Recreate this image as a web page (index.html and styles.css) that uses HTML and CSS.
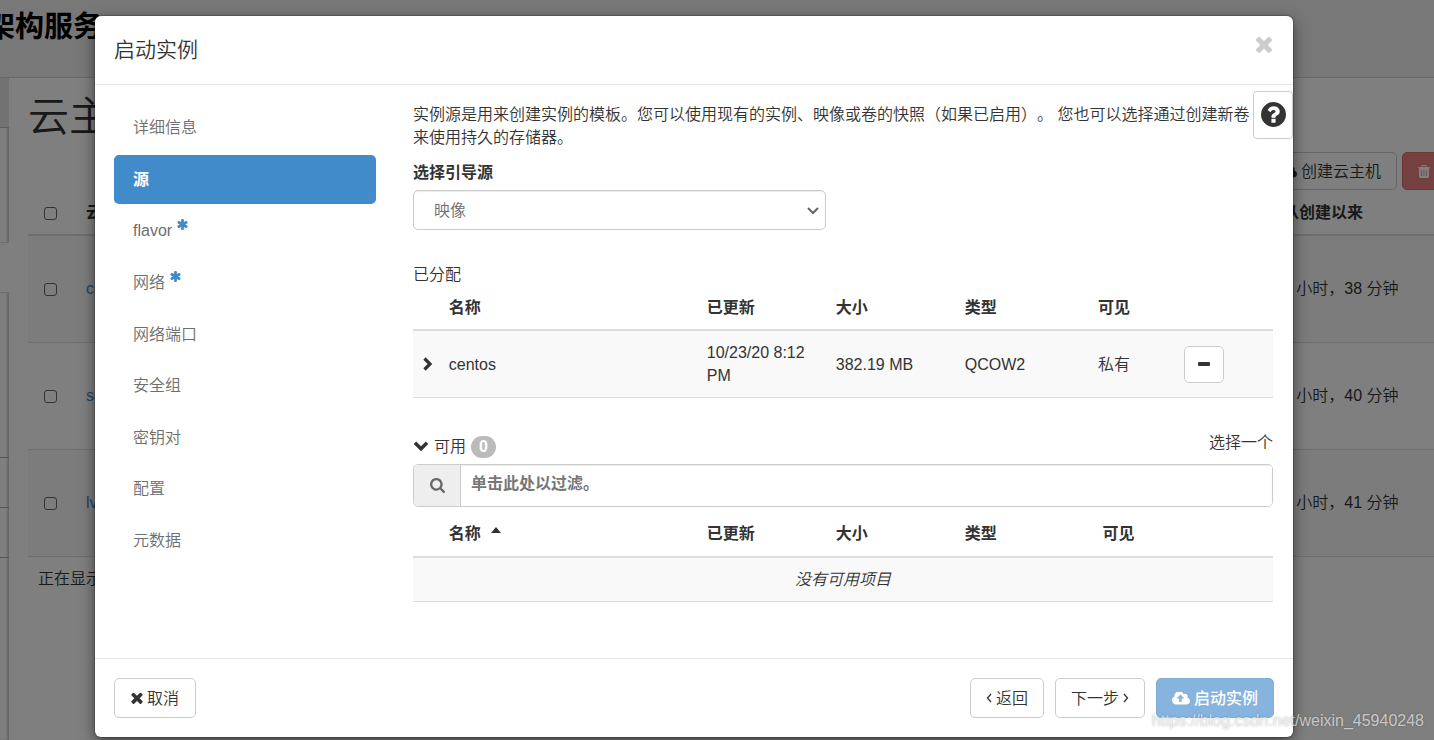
FILE: index.html
```html
<!DOCTYPE html>
<html lang="zh-CN">
<head>
<meta charset="utf-8">
<title>启动实例</title>
<link rel="stylesheet" href="styles.css">
</head>
<body>
<svg class="sprite" aria-hidden="true">
  <symbol id="i-times" viewBox="300 300 1192 1256"><path d="M1490 1322q0 40-28 68l-136 136q-28 28-68 28t-68-28l-294-294-294 294q-28 28-68 28t-68-28l-136-136q-28-28-28-68t28-68l294-294-294-294q-28-28-28-68t28-68l136-136q28-28 68-28t68 28l294 294 294-294q28-28 68-28t68 28l136 136q28 28 28 68t-28 68l-294 294 294 294q28 28 28 68z"/></symbol>
  <symbol id="i-question" viewBox="128 128 1536 1536"><path d="M1024 1376v-192q0-14-9-23t-23-9h-192q-14 0-23 9t-9 23v192q0 14 9 23t23 9h192q14 0 23-9t9-23zm256-672q0-88-55.500-163t-138.500-116-170-41q-243 0-371 213-15 24 8 42l132 100q7 6 19 6 16 0 25-12 53-68 86-92 34-24 86-24 48 0 85.500 26t37.500 59q0 38-20 61t-68 45q-63 28-115.500 86.500t-52.500 125.500v36q0 14 9 23t23 9h192q14 0 23-9t9-23q0-19 21.500-49.500t54.500-49.500q32-18 49-28.500t46-35 44.500-48 28-60.500 12.500-81zm384 192q0 209-103 385.500t-279.500 279.500-385.500 103-385.500-103-279.500-279.500-103-385.500 103-385.500 279.500-279.500 385.500-103 385.500 103 279.500 279.500 103 385.500z"/></symbol>
  <symbol id="i-search" viewBox="64 128 1664 1664"><path d="M1216 832q0-185-131.500-316.500t-316.500-131.500-316.500 131.500-131.500 316.500 131.500 316.500 316.500 131.500 316.500-131.500 131.500-316.500zm512 832q0 52-38 90t-90 38q-54 0-90-38l-343-342q-179 124-399 124-143 0-273.500-55.500t-225-150-150-225-55.500-273.500 55.500-273.500 150-225 225-150 273.500-55.500 273.500 55.500 225 150 150 225 55.500 273.500q0 220-124 399l343 343q37 37 37 90z"/></symbol>
  <symbol id="i-asterisk" viewBox="180 128 1432 1536"><path d="M1546 1050q46 26 59.500 77.500t-12.500 97.500l-64 110q-26 46-77.500 59.500t-97.500-12.500l-266-153v307q0 52-38 90t-90 38h-128q-52 0-90-38t-38-90v-307l-266 153q-46 26-97.500 12.500t-77.500-59.500l-64-110q-26-46-12.500-97.500t59.500-77.500l266-154-266-154q-46-26-59.500-77.500t12.500-97.500l64-110q26-46 77.500-59.500t97.500 12.500l266 153v-307q0-52 38-90t90-38h128q52 0 90 38t38 90v307l266-153q46-26 97.500-12.500t77.500 59.500l64 110q26 46 12.500 97.500t-59.500 77.500l-266 154z"/></symbol>
  <symbol id="i-cloud" viewBox="0 192 1920 1280"><path d="M1280 800q0-14-9-23l-352-352q-9-9-23-9t-23 9l-351 351q-10 12-10 24 0 14 9 23t23 9h224v352q0 13 9.500 22.500t22.500 9.500h192q13 0 22.500-9.500t9.500-22.500v-352h224q13 0 22.500-9.500t9.500-22.500zm640 288q0 159-112.500 271.500t-271.500 112.500h-1088q-185 0-316.500-131.500t-131.500-316.500q0-130 70-240t188-165q-2-30-2-43 0-212 150-362t362-150q156 0 285.500 87t188.500 231q71-62 166-62 106 0 181 75t75 181q0 76-41 138 130 31 213.500 135.500t83.500 238.500z"/></symbol>
  <symbol id="i-trash" viewBox="0 0 12 13"><path fill-rule="evenodd" d="M4 0h4l1 2h3v1.300h-1v8.200Q11 13 9.500 13h-7Q1 13 1 11.500V3.300H0V2h3zM4.500 1l-.4 1h3.800l-.4-1zM3.300 5v6h.7V5zM5.600 5v6h.7V5zM8 5v6h.7V5z"/></symbol>
  <symbol id="i-right" viewBox="0 0 10 14"><path d="M1.500 1.500 7 7l-5.500 5.500" fill="none" stroke="currentColor" stroke-width="3.200"/></symbol>
  <symbol id="i-down" viewBox="0 0 14 10"><path d="M1.500 1.500 7 7l5.500-5.500" fill="none" stroke="currentColor" stroke-width="3.200"/></symbol>
  <symbol id="i-select" viewBox="0 0 12 8"><path d="M1 1l5 5 5-5" fill="none" stroke="currentColor" stroke-width="2"/></symbol>
  <symbol id="i-thin-left" viewBox="0 0 6 10"><path d="M5 1 1.500 5 5 9" fill="none" stroke="currentColor" stroke-width="1.300"/></symbol>
  <symbol id="i-thin-right" viewBox="0 0 6 10"><path d="M1 1l3.500 4L1 9" fill="none" stroke="currentColor" stroke-width="1.300"/></symbol>
  <symbol id="i-minus" viewBox="0 0 12 4"><rect width="12" height="4" rx="1"/></symbol>
  <symbol id="i-caret" viewBox="0 0 10 6"><path d="M0 6 5 0l5 6z"/></symbol>
</svg>

<div class="page">
  <header class="topbar"><span class="brand">架构服务</span></header>
  <div class="page-body">
    <aside class="rail">
      <div class="rail-top"></div>
      <div class="rail-group"></div>
      <div class="rail-active"></div>
      <div class="rail-long"></div>
      <div class="rail-item"></div>
      <div class="rail-item"></div>
      <div class="rail-rest"></div>
    </aside>
    <main class="main">
      <h1 class="page-title">云主机</h1>
      <div class="toolbar">
        <button class="btn tool-btn" type="button"><svg class="ic-cloud"><use href="#i-cloud"/></svg>创建云主机</button>
        <button class="btn tool-btn danger" type="button"><svg class="ic-trash"><use href="#i-trash"/></svg>删除实例</button>
      </div>
      <table class="hosts">
        <colgroup><col class="h-check"><col><col class="h-time"></colgroup>
        <thead><tr><th><input type="checkbox" aria-label="全选"></th><th>云主机名称</th><th>从创建以来</th></tr></thead>
        <tbody>
          <tr><td><input type="checkbox" aria-label="centos"></td><td><a href="#">centos</a></td><td>2 小时，38 分钟</td></tr>
          <tr><td><input type="checkbox" aria-label="server"></td><td><a href="#">server</a></td><td>2 小时，40 分钟</td></tr>
          <tr><td><input type="checkbox" aria-label="lvm"></td><td><a href="#">lvm</a></td><td>2 小时，41 分钟</td></tr>
        </tbody>
      </table>
      <p class="hosts-foot">正在显示 3 项</p>
    </main>
  </div>
</div>

<div class="overlay">
  <section class="modal" role="dialog" aria-labelledby="dlg-title">
    <header class="modal-head">
      <h2 class="modal-title" id="dlg-title">启动实例</h2>
      <button class="close" type="button" aria-label="关闭"><svg class="ic-close"><use href="#i-times"/></svg></button>
    </header>
    <div class="modal-body">
      <button class="help" type="button" aria-label="帮助"><svg class="ic-help"><use href="#i-question"/></svg></button>
      <nav class="steps">
        <a class="step" href="#">详细信息</a>
        <a class="step active" href="#">源</a>
        <a class="step" href="#">flavor<svg class="ic-req"><use href="#i-asterisk"/></svg></a>
        <a class="step" href="#">网络<svg class="ic-req"><use href="#i-asterisk"/></svg></a>
        <a class="step" href="#">网络端口</a>
        <a class="step" href="#">安全组</a>
        <a class="step" href="#">密钥对</a>
        <a class="step" href="#">配置</a>
        <a class="step" href="#">元数据</a>
      </nav>
      <div class="content">
        <p class="intro">实例源是用来创建实例的模板。您可以使用现有的实例、映像或卷的快照（如果已启用）。 您也可以选择通过创建新卷来使用持久的存储器。</p>
        <label class="field-label" for="source">选择引导源</label>
        <div class="source-box">
          <select class="source" id="source"><option>映像</option></select>
          <svg class="ic-select"><use href="#i-select"/></svg>
        </div>
        <h3 class="sub">已分配</h3>
        <table class="grid allocated">
          <colgroup><col class="c-exp"><col class="c-name"><col class="c-mid"><col class="c-mid"><col class="c-type"><col class="c-vis"><col></colgroup>
          <thead><tr><th></th><th>名称</th><th>已更新</th><th>大小</th><th>类型</th><th>可见</th><th></th></tr></thead>
          <tbody><tr>
            <td><svg class="ic-right"><use href="#i-right"/></svg></td>
            <td>centos</td><td>10/23/20 8:12 PM</td><td>382.19 MB</td><td>QCOW2</td><td>私有</td>
            <td><button class="btn remove" type="button" aria-label="移除"><svg class="ic-minus"><use href="#i-minus"/></svg></button></td>
          </tr></tbody>
        </table>
        <div class="avail-head">
          <div class="avail-title"><svg class="ic-down"><use href="#i-down"/></svg><span>可用</span><span class="badge">0</span></div>
          <span class="pick">选择一个</span>
        </div>
        <div class="filter">
          <span class="filter-icon"><svg class="ic-search"><use href="#i-search"/></svg></span>
          <input class="filter-input" type="text" placeholder="单击此处以过滤。" aria-label="过滤">
        </div>
        <table class="grid available">
          <colgroup><col class="c-exp"><col class="c-name"><col class="c-mid"><col class="c-mid"><col class="c-type2"><col></colgroup>
          <thead><tr><th></th><th>名称<svg class="ic-caret"><use href="#i-caret"/></svg></th><th>已更新</th><th>大小</th><th>类型</th><th>可见</th></tr></thead>
          <tbody><tr><td class="empty" colspan="6">没有可用项目</td></tr></tbody>
        </table>
      </div>
    </div>
    <footer class="modal-foot">
      <button class="btn cancel" type="button"><svg class="ic-cancel"><use href="#i-times"/></svg>取消</button>
      <button class="btn" type="button"><svg class="ic-thin"><use href="#i-thin-left"/></svg>返回</button>
      <button class="btn" type="button">下一步<svg class="ic-thin"><use href="#i-thin-right"/></svg></button>
      <button class="btn primary" type="button" disabled><svg class="ic-cloud"><use href="#i-cloud"/></svg>启动实例</button>
    </footer>
  </section>
  <span class="watermark">https://blog.csdn.net/weixin_45940248</span>
</div>
</body>
</html>
```
FILE: styles.css
```css
* { box-sizing: border-box; }
body {
  margin: 0;
  overflow: hidden;
  color: #333;
  font: 350 16px/23px "Liberation Sans", "Noto Sans CJK SC", sans-serif;
  text-spacing-trim: space-all;
}
svg { fill: currentColor; flex: none; }
.sprite { position: absolute; width: 0; height: 0; }
h1, h2, h3, p { margin: 0; font-weight: 350; }
a { color: #428bca; text-decoration: none; }
button, input, select { font: inherit; color: inherit; }
table { width: 100%; border-collapse: collapse; table-layout: fixed; }
th, td { text-align: left; }

.btn {
  display: inline-flex;
  align-items: center;
  justify-content: center;
  gap: 4px;
  height: 40px;
  padding: 0 16px;
  border: 1px solid #ccc;
  border-radius: 5px;
  background: #fff;
  white-space: nowrap;
}
.ic-cloud { width: 18px; height: 13px; }

/* Page behind the dialog */
.page { display: flex; flex-direction: column; height: 100vh; overflow: hidden; }
.topbar {
  height: 78px;
  padding-top: 7px;
  border-bottom: 1px solid #d0d0d0;
  background: #f0f0f0;
}
.brand {
  display: block;
  margin-left: -14px;
  color: #000;
  font-size: 29px;
  font-weight: 700;
  line-height: 40px;
}
.page-body { display: flex; flex: 1; }
.rail {
  display: flex;
  flex-direction: column;
  width: 9px;
  box-shadow: inset -2px 0 2px #ccc;
}
.rail-top { height: 50px; background: #e4e4e4; border-bottom: 1px solid #bbb; }
.rail-group { height: 115px; border-bottom: 1px solid #ddd; }
.rail-active { height: 49px; background: #fff; }
.rail-long { height: 166px; border-top: 1px solid #ddd; border-bottom: 1px solid #aaa; }
.rail-item { height: 50px; border-bottom: 1px solid #aaa; }
.rail-rest { flex: 1; }
.main { flex: 1; min-width: 0; padding: 11px 0 0 19px; }
.page-title { font-size: 41px; line-height: 56px; }
.toolbar { display: flex; justify-content: flex-end; gap: 5px; margin: 7px -80px 0 0; }
.tool-btn { height: 38px; padding: 0 15px; }
.tool-btn.danger { border-color: #e06c6c; background: #e88080; color: #fff; }
.ic-trash { width: 12px; height: 13px; }
.hosts .h-check { width: 48px; }
.hosts .h-time { width: 161px; }
.hosts th { height: 45px; padding: 0 10px; border-bottom: 2px solid #ddd; }
.hosts td { height: 107px; padding: 0 10px; border-bottom: 1px solid #ddd; }
.hosts tbody tr:nth-child(odd) { background: #f9f9f9; }
.hosts th:first-child, .hosts td:first-child { padding: 2px 16px 0; }
.hosts input {
  display: block;
  width: 13px;
  height: 13px;
  margin: 0;
  border: 1px solid #666;
  border-radius: 3px;
  appearance: none;
}
.hosts-foot { padding: 10px; }

/* Dialog */
.overlay {
  position: absolute;
  inset: 0;
  padding: 16px 141px 3px 95px;
  background: rgba(0, 0, 0, .5);
}
.modal {
  border-radius: 6px;
  background: #fff;
  box-shadow: 0 5px 15px rgba(0, 0, 0, .5), 0 0 1px 1px rgba(0, 0, 0, .2);
}
.modal-head {
  display: flex;
  justify-content: space-between;
  padding: 19px 20px 19px 19px;
  border-bottom: 1px solid #e5e5e5;
}
.modal-title { font-size: 21px; line-height: 30px; }
.close { display: flex; align-items: flex-start; height: 30px; padding: 1px 0 0; border: 0; background: none; color: #ccc; }
.ic-close { width: 18px; height: 17px; }
.modal-body { position: relative; display: flex; gap: 37px; padding: 18px 20px 56px 19px; }
.help {
  position: absolute;
  top: 6px;
  right: 0;
  display: flex;
  align-items: center;
  justify-content: center;
  width: 40px;
  height: 48px;
  padding: 0 0 2px;
  border: 1px solid #ccc;
  border-radius: 4px;
  background: #fff;
}
.ic-help { width: 25px; height: 25px; }
.steps {
  display: flex;
  flex: none;
  flex-direction: column;
  justify-content: space-between;
  width: 262px;
  padding-bottom: 37px;
}
.step {
  display: flex;
  gap: 5px;
  padding: 13px 19px;
  border-radius: 5px;
  color: #6e6e6e;
}
.step.active { background: #428bca; color: #fff; font-weight: 700; }
.ic-req { width: 11px; height: 11px; color: #428bca; }
.content { flex: 1; min-width: 0; }
.intro { padding-right: 10px; }
.field-label { display: block; margin-top: 12px; font-weight: 700; }
.source-box { position: relative; width: 48%; margin-top: 6px; }
.source {
  display: block;
  width: 100%;
  height: 40px;
  padding: 0 30px 0 20px;
  border: 1px solid #ccc;
  border-radius: 5px;
  background: #fff;
  box-shadow: inset 0 1px 1px rgba(0, 0, 0, .08);
  color: #6e6e6e;
  appearance: none;
}
.ic-select {
  position: absolute;
  top: 17px;
  right: 7px;
  width: 12px;
  height: 8px;
  color: #666;
  pointer-events: none;
}
.sub { margin-top: 33px; font-size: 16px; line-height: 23px; }

.c-exp { width: 3%; }
.c-name { width: 30%; }
.c-mid { width: 15%; }
.c-type { width: 15.5%; }
.c-type2 { width: 16%; }
.c-vis { width: 10%; }
.grid th { height: 44px; padding: 0 10px; border-bottom: 2px solid #ddd; }
.grid td { padding: 10px; border-bottom: 1px solid #ddd; background: #f9f9f9; }
.grid td:first-child:not(.empty) { padding: 0 10px; }
.grid .empty { text-align: center; font-style: italic; }
.ic-right { display: block; width: 10px; height: 14px; }
.remove { width: 40px; height: 37px; padding: 0; vertical-align: middle; }
.ic-minus { width: 12px; height: 4px; }
.avail-head { display: flex; justify-content: space-between; margin-top: 33px; padding-bottom: 6px; }
.avail-title { display: flex; align-items: center; gap: 5px; padding-top: 4px; }
.ic-down { width: 16px; height: 11px; }
.badge {
  padding: 0 8px;
  border-radius: 11px;
  background: #bbb;
  color: #fff;
  font-weight: 700;
  line-height: 22px;
}
.filter { display: flex; border: 1px solid #ccc; border-radius: 5px; overflow: hidden; }
.filter-icon {
  display: flex;
  align-items: center;
  justify-content: center;
  width: 47px;
  border-right: 1px solid #ccc;
  background: #eee;
  color: #666;
}
.ic-search { width: 15px; height: 15px; }
.filter-input {
  flex: 1;
  min-width: 0;
  height: 41px;
  padding: 0 10px 4px;
  border: 0;
  box-shadow: inset 0 1px 1px rgba(0, 0, 0, .08);
  font-weight: 700;
}
.filter-input::placeholder { color: #777; }
.available th { height: 50px; padding-top: 4px; }
.ic-caret { width: 10px; height: 6px; margin-left: 10px; vertical-align: 6px; }

.modal-foot {
  display: flex;
  gap: 11px;
  padding: 19px;
  border-top: 1px solid #e5e5e5;
}
.modal-foot .btn { padding: 0 15px; }
.modal-foot .cancel { margin-right: auto; padding: 0 16px; }
.ic-cancel { width: 12px; height: 12px; }
.ic-thin { width: 6px; height: 10px; }
.primary { border-color: #7eafdb; background: #86b4de; color: #fff; font-weight: 500; }
.watermark {
  position: absolute;
  right: 10px;
  bottom: 8px;
  color: rgba(255, 255, 255, .65);
  text-shadow: 0 0 2px rgba(0, 0, 0, .3);
}
```
